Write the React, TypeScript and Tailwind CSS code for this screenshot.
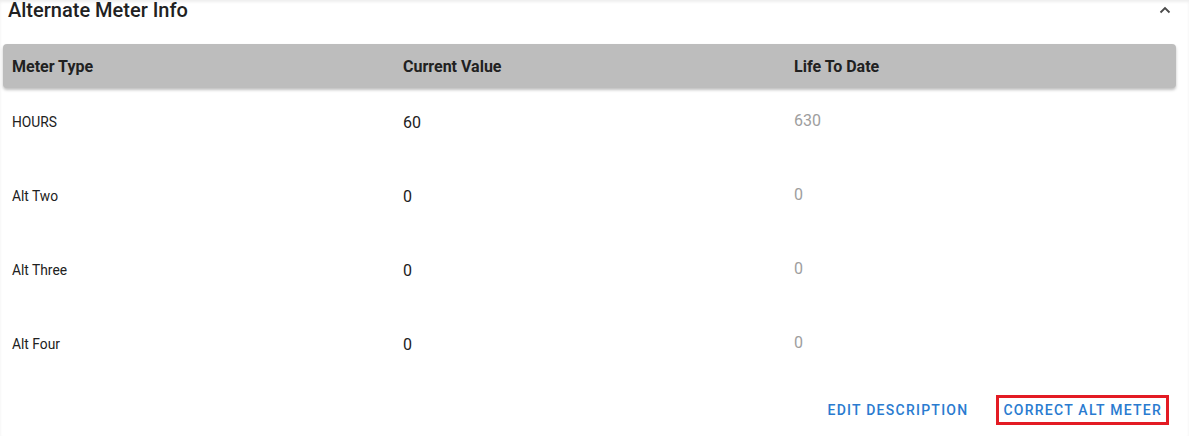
import React from 'react'

const rows = [
  { type: 'HOURS', current: '60', ltd: '630' },
  { type: 'Alt Two', current: '0', ltd: '0' },
  { type: 'Alt Three', current: '0', ltd: '0' },
  { type: 'Alt Four', current: '0', ltd: '0' },
]

export default function App() {
  return (
    <div
      className="w-[1189px] h-[436px] bg-white overflow-hidden text-[#212121] shadow-[inset_0_2px_3px_rgba(0,0,0,0.07)]"
      style={{ fontFamily: 'Roboto, "Liberation Sans", sans-serif' }}
    >
      {/* section header */}
      <div className="flex items-start justify-between pl-[8px] pr-[18px] h-[44px]">
        <h2 className="text-[20px] leading-[20px] font-medium">Alternate Meter Info</h2>
        <svg className="mt-[6px]" width="12" height="8" viewBox="0 0 12 8" fill="none">
          <polyline points="1.5,6.5 6,2 10.5,6.5" stroke="#4a4a4a" strokeWidth="1.8" />
        </svg>
      </div>

      {/* table head */}
      <div className="mx-[3px] w-[1173px] h-[44px] bg-[#bdbdbd] rounded-[4px] shadow-[0_2px_3px_rgba(0,0,0,0.25)] grid grid-cols-[391px_391px_1fr] items-center pl-[9px] pt-[2px] text-[16px] font-bold">
        <div>Meter Type</div>
        <div>Current Value</div>
        <div>Life To Date</div>
      </div>

      {/* table body */}
      <div className="pl-[12px]">
        {rows.map(r => (
          <div key={r.type} className="h-[74px] grid grid-cols-[391px_391px_1fr] items-start pt-[23px]">
            <div className="text-[13.8px] leading-[22px]">{r.type}</div>
            <div className="text-[16px] leading-[24px]">{r.current}</div>
            <div className="text-[16px] leading-[20px] text-[#9e9e9e]">{r.ltd}</div>
          </div>
        ))}
      </div>

      {/* actions */}
      <div className="flex justify-end items-center gap-[26px] pr-[20px] mt-[11px]">
        <button className="text-[14px] font-medium tracking-[1.25px] text-[#2a7bd0] leading-[24px] px-[2px]">
          EDIT DESCRIPTION
        </button>
        <button className="text-[14px] font-medium tracking-[1.25px] text-[#2a7bd0] leading-[24px] px-[4px] border-[3px] border-[#e31b23]">
          CORRECT ALT METER
        </button>
      </div>
    </div>
  )
}
